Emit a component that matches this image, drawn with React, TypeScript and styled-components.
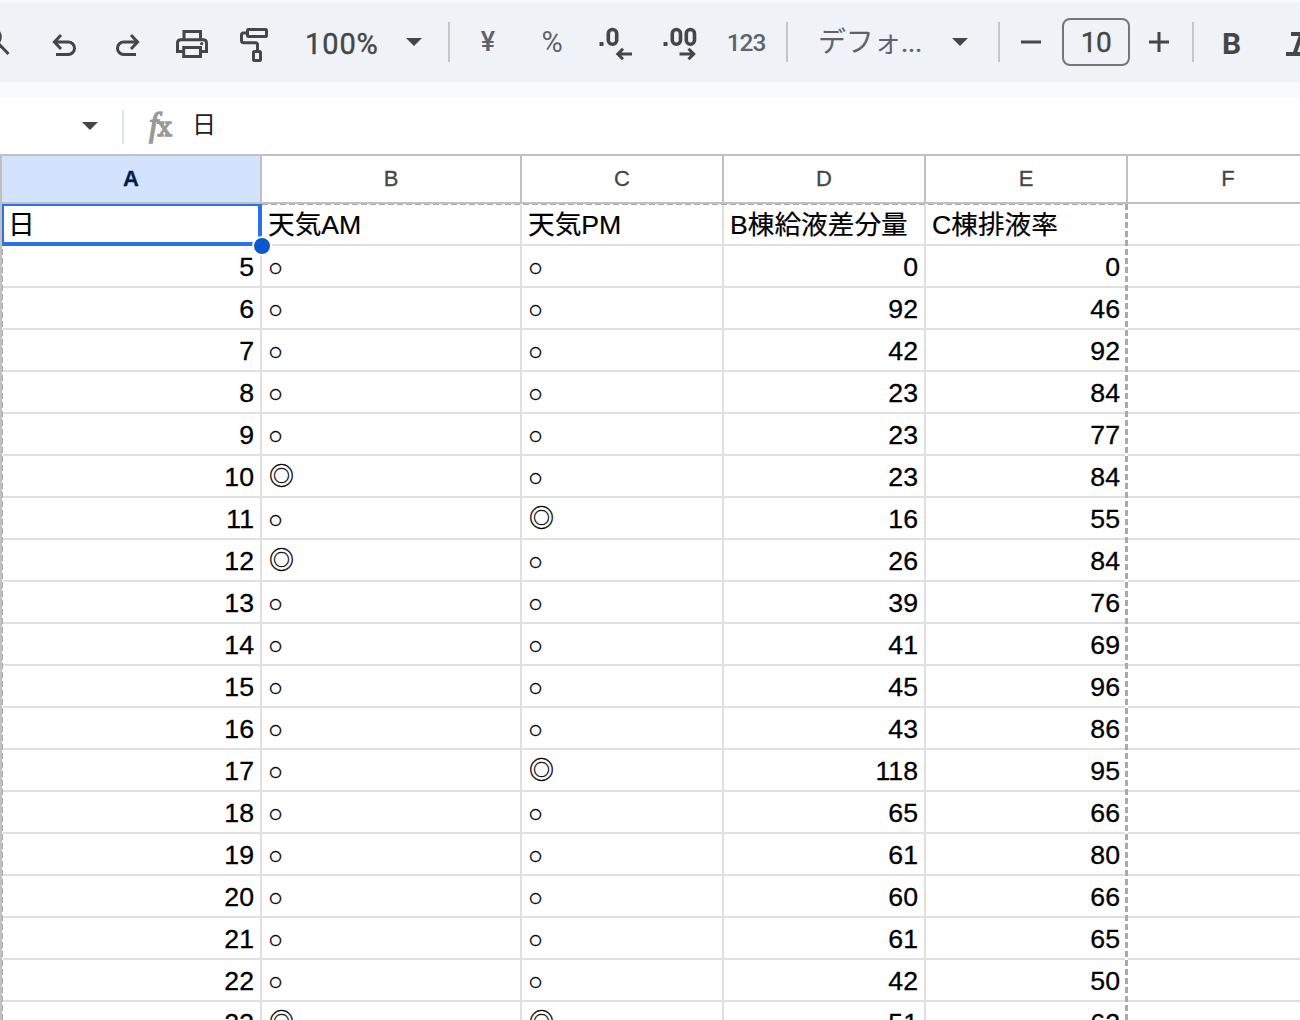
import styled, { createGlobalStyle, css } from 'styled-components'

const theme = {
  toolbar: '#eff3f8',
  gap: '#f9fafe',
  icon: '#444746',
  muted: '#5f6368',
  divider: '#c4c7c5',
  headerLine: '#c0c0c0',
  line: '#e0e0e0',
  selected: '#d3e3fd',
  active: '#2a70f0',
  handle: '#0b57d0',
}

const GlobalStyle = createGlobalStyle`
  * {
    box-sizing: border-box;
  }

  body {
    margin: 0;
    background-color: #fff;
  }
`

const Container = styled.div`
  width: 1300px;
  height: 1020px;
  overflow: hidden;
  display: flex;
  flex-direction: column;
  background-color: #fff;
  font-family: 'Liberation Sans', 'Noto Sans CJK JP', sans-serif;
`

const Toolbar = styled.div`
  flex: none;
  height: 97px;
  border-top: 2px solid ${theme.gap};
  border-bottom: 15px solid ${theme.gap};
  background-color: ${theme.toolbar};
  display: flex;
  align-items: center;
  overflow: hidden;
`

const Slot = styled.div<{ $width: number }>`
  flex: none;
  width: ${props => props.$width}px;
  height: 80px;
  display: flex;
  align-items: center;
  justify-content: center;
`

const Icon = styled.svg`
  flex: none;
  display: block;
  fill: none;
  stroke: ${theme.icon};
  stroke-width: 3;
`

const Divider = styled.div`
  flex: none;
  width: 2px;
  height: 40px;
  background-color: ${theme.divider};
`

const Caret = styled.div`
  flex: none;
  border: 8px solid transparent;
  border-top-color: ${theme.icon};
  border-bottom: none;
`

const Zoom = styled.div`
  flex: none;
  width: 164px;
  padding: 4px 26px 0 21px;
  display: flex;
  align-items: center;
  justify-content: space-between;
  color: ${theme.icon};
  font-family: Roboto, sans-serif;
  font-size: 29px;
  letter-spacing: 0.9px;
  -webkit-text-stroke: 0.4px ${theme.icon};

  ${Caret} {
    margin-top: -4px;
  }
`

const Format = styled.span<{ $size: number; $spacing?: number; $weight?: number }>`
  color: ${theme.muted};
  font-family: Roboto, sans-serif;
  font-size: ${props => props.$size}px;
  font-weight: ${props => props.$weight ?? 500};
  letter-spacing: ${props => props.$spacing ?? 0}px;
`

const FontSelect = styled.div`
  flex: none;
  width: 210px;
  padding: 0 30px 0 30px;
  display: flex;
  align-items: center;
  justify-content: space-between;
  color: ${theme.muted};
  font-family: 'Noto Sans CJK JP', sans-serif;
  font-size: 28px;
  font-weight: 400;
  line-height: 40px;
  white-space: nowrap;
`

const FontName = styled.span`
  letter-spacing: -0.3px;
  margin-top: -2px;
`

const Dots = styled.span`
  font-family: Roboto, sans-serif;
  font-weight: 500;
  font-size: 26px;
`

const SizeBox = styled.div`
  flex: none;
  width: 68px;
  height: 48px;
  border: 2px solid #747775;
  border-radius: 8px;
  display: flex;
  align-items: center;
  justify-content: center;
  color: ${theme.icon};
  font-family: Roboto, sans-serif;
  font-size: 28px;
  letter-spacing: -0.5px;
  -webkit-text-stroke: 0.4px ${theme.icon};
`

const Bold = styled.span`
  color: ${theme.icon};
  font-family: Roboto, sans-serif;
  font-size: 30px;
  font-weight: 700;
  padding-top: 2px;
`

const FormulaBar = styled.div`
  flex: none;
  height: 57px;
  padding-left: 82px;
  display: flex;
  align-items: center;
`

const FormulaDivider = styled.div`
  width: 2px;
  height: 34px;
  margin: 2px 20px 0 24px;
  background-color: #dbe2ec;
`

const Fx = styled.div`
  width: 48px;
  color: #999;
  font-family: 'Liberation Serif', serif;
  font-size: 33px;
  font-style: italic;
  line-height: 40px;
  white-space: nowrap;
  padding-left: 5px;
  -webkit-text-stroke: 1.4px #999;

  span {
    font-family: 'DejaVu Serif', serif;
    font-size: 26px;
    font-style: normal;
    margin-left: -1px;
  }
`

const FormulaText = styled.div`
  color: #202124;
  font-size: 24px;
  line-height: 40px;
  margin-top: -2px;
`

const Sheet = styled.div`
  flex: none;
  position: relative;
  border-top: 2px solid ${theme.headerLine};
  border-left: 2px solid ${theme.headerLine};
`

const Row = styled.div`
  display: grid;
  grid-template-columns: 260px 260px 202px 202px 202px 202px;
`

const HeaderCell = styled.div<{ $selected?: boolean }>`
  height: 48px;
  border-right: 2px solid ${theme.headerLine};
  border-bottom: 2px solid ${theme.headerLine};
  display: flex;
  align-items: center;
  justify-content: center;
  padding-bottom: 1px;
  color: ${theme.icon};
  font-size: 22px;
  -webkit-text-stroke: 0.3px currentColor;

  ${props => props.$selected && css`
    background-color: ${theme.selected};
    color: #041e49;
    font-weight: 700;
  `}
`

const Cell = styled.div<{ $right?: boolean }>`
  height: 42px;
  border-right: 2px solid ${theme.line};
  border-bottom: 2px solid ${theme.line};
  padding: 0 6px;
  color: #000;
  font-size: 26.67px;
  line-height: 42px;
  text-align: ${props => (props.$right ? 'right' : 'left')};
  white-space: nowrap;
  overflow: hidden;
  -webkit-text-stroke: 0.2px #000;
`

const NumberCell = styled(Cell)`
  -webkit-text-stroke: 0.3px #000;
`

const MarkCell = styled(Cell)<{ $small: boolean }>`
  padding-left: ${props => (props.$small ? 6 : 7)}px;
  font-size: 25px;
  line-height: ${props => (props.$small ? 43 : 41)}px;
  -webkit-text-stroke: 0.3px #000;
`

const Selection = styled.div`
  position: absolute;
  top: 48px;
  left: 0;
  width: 260px;
  height: 42px;
  border: 2px solid ${theme.active};
  border-right-width: 4px;
  border-bottom-width: 4px;
`

const Handle = styled.div`
  position: absolute;
  top: 80px;
  left: 250px;
  width: 20px;
  height: 20px;
  border: 2px solid #fff;
  border-radius: 50%;
  background-color: ${theme.handle};
`

const DashTop = styled.div`
  position: absolute;
  top: 48px;
  left: 260px;
  width: 864px;
  height: 1px;
  background: repeating-linear-gradient(to right, #aaa 0 6px, #fff 6px 9px);
`

const DashSide = styled.div<{ $left: number; $width: number }>`
  position: absolute;
  top: 48px;
  bottom: 0;
  left: ${props => props.$left}px;
  width: ${props => props.$width}px;
  background: repeating-linear-gradient(to bottom, #aaa 0 6px, #fff 6px 9px);
`

const columns = ['A', 'B', 'C', 'D', 'E', 'F']
const titles = ['日', '天気AM', '天気PM', 'B棟給液差分量', 'C棟排液率', '']

const records: [number, string, string, number, number][] = [
  [5, '○', '○', 0, 0],
  [6, '○', '○', 92, 46],
  [7, '○', '○', 42, 92],
  [8, '○', '○', 23, 84],
  [9, '○', '○', 23, 77],
  [10, '◎', '○', 23, 84],
  [11, '○', '◎', 16, 55],
  [12, '◎', '○', 26, 84],
  [13, '○', '○', 39, 76],
  [14, '○', '○', 41, 69],
  [15, '○', '○', 45, 96],
  [16, '○', '○', 43, 86],
  [17, '○', '◎', 118, 95],
  [18, '○', '○', 65, 66],
  [19, '○', '○', 61, 80],
  [20, '○', '○', 60, 66],
  [21, '○', '○', 61, 65],
  [22, '○', '○', 42, 50],
  [23, '◎', '◎', 51, 62],
]

const App: React.FC = () => {
  return (
    <Container>
      <GlobalStyle />
      <Toolbar>
        <Slot $width={32}>
          <Icon width="32" height="40" viewBox="0 0 32 40">
            <circle cx="-8" cy="15" r="8.3" />
            <path d="M-2 21L8.5 32" />
          </Icon>
        </Slot>
        <Slot $width={64}>
          <Icon width="40" height="40" viewBox="0 0 40 40">
            <path d="M17 13L10.4 20L17 27M10.5 20H24.3a6.25 6.25 0 0 1 0 12.5H12" />
          </Icon>
        </Slot>
        <Slot $width={64}>
          <Icon width="40" height="40" viewBox="0 0 40 40">
            <path d="M23 13L29.6 20L23 27M29.5 20H15.7a6.25 6.25 0 0 0 0 12.5H28" />
          </Icon>
        </Slot>
        <Slot $width={64}>
          <Icon width="40" height="40" viewBox="0 0 40 40">
            <path d="M12 17V9.5H28.5V17" />
            <path d="M11 29.5H5.5V21Q5.5 17.7 8.8 17.7H31.2Q34.5 17.7 34.5 21V29.5H29" />
            <path d="M11.7 25.5H28.5V34.5H11.7Z" />
            <circle cx="29.7" cy="21.7" r="1.6" fill={theme.icon} stroke="none" />
          </Icon>
        </Slot>
        <Slot $width={60}>
          <Icon width="40" height="40" viewBox="0 0 40 40">
            <rect x="13.5" y="7.5" width="19" height="7" rx="1" />
            <path d="M13 11H9.5Q7.5 11 7.5 13V18.5Q7.5 20.7 9.7 20.7H21.5Q23.5 20.7 23.5 22.7V29" />
            <rect x="19.5" y="29.5" width="7" height="9" rx="1" />
          </Icon>
        </Slot>
        <Zoom>
          100%
          <Caret />
        </Zoom>
        <Divider />
        <Slot $width={76}>
          <Format $size={27}>¥</Format>
        </Slot>
        <Slot $width={52}>
          <Format $size={29} $weight={400}>%</Format>
        </Slot>
        <Slot $width={76}>
          <Icon width="40" height="40" viewBox="0 0 40 40">
            <path d="M3.5 24V20H7.5V24Z" fill={theme.icon} stroke="none" />
            <rect x="12.3" y="7.5" width="8.4" height="14.7" rx="4" strokeWidth="3.6" />
            <path d="M36 32H21.5M27 26.8L21.8 32L27 37.2" />
          </Icon>
        </Slot>
        <Slot $width={52}>
          <Icon width="40" height="40" viewBox="0 0 40 40">
            <path d="M3.5 24V20H7.5V24Z" fill={theme.icon} stroke="none" />
            <rect x="12.3" y="7.5" width="8.2" height="14.7" rx="4" strokeWidth="3.6" />
            <rect x="26.3" y="7.5" width="8.2" height="14.7" rx="4" strokeWidth="3.6" />
            <path d="M19.5 32H34M28.5 26.8L33.7 32L28.5 37.2" />
          </Icon>
        </Slot>
        <Slot $width={80}>
          <Format $size={24.5} $spacing={-1.1}>123</Format>
        </Slot>
        <Divider />
        <FontSelect>
          <FontName>デフォ<Dots>...</Dots></FontName>
          <Caret />
        </FontSelect>
        <Divider />
        <Slot $width={62}>
          <Icon width="20" height="20" viewBox="0 0 20 20">
            <path d="M0 10H20" />
          </Icon>
        </Slot>
        <SizeBox>10</SizeBox>
        <Slot $width={58}>
          <Icon width="20" height="20" viewBox="0 0 20 20">
            <path d="M0 10H20M10 0V20" />
          </Icon>
        </Slot>
        <Slot $width={4} />
        <Divider />
        <Slot $width={75}>
          <Bold>B</Bold>
        </Slot>
        <Slot $width={64}>
          <Icon width="32" height="40" viewBox="0 0 32 40">
            <path d="M6 12H23M16.5 12L9.5 32M1 32H17" strokeWidth="4" />
          </Icon>
        </Slot>
      </Toolbar>
      <FormulaBar>
        <Caret />
        <FormulaDivider />
        <Fx>f<span>x</span></Fx>
        <FormulaText>日</FormulaText>
      </FormulaBar>
      <Sheet>
        <Row>
          {columns.map((name, index) => (
            <HeaderCell key={name} $selected={index === 0}>{name}</HeaderCell>
          ))}
        </Row>
        <Row>
          {titles.map((title, index) => (
            <Cell key={index}>{title}</Cell>
          ))}
        </Row>
        {records.map(([day, am, pm, supply, drain]) => (
          <Row key={day}>
            <NumberCell $right>{day}</NumberCell>
            <MarkCell $small={am === '○'}>{am}</MarkCell>
            <MarkCell $small={pm === '○'}>{pm}</MarkCell>
            <NumberCell $right>{supply}</NumberCell>
            <NumberCell $right>{drain}</NumberCell>
            <Cell />
          </Row>
        ))}
        <DashTop />
        <DashSide $left={0} $width={1} />
        <DashSide $left={1123} $width={3} />
        <Selection />
        <Handle />
      </Sheet>
    </Container>
  )
}

export default App
